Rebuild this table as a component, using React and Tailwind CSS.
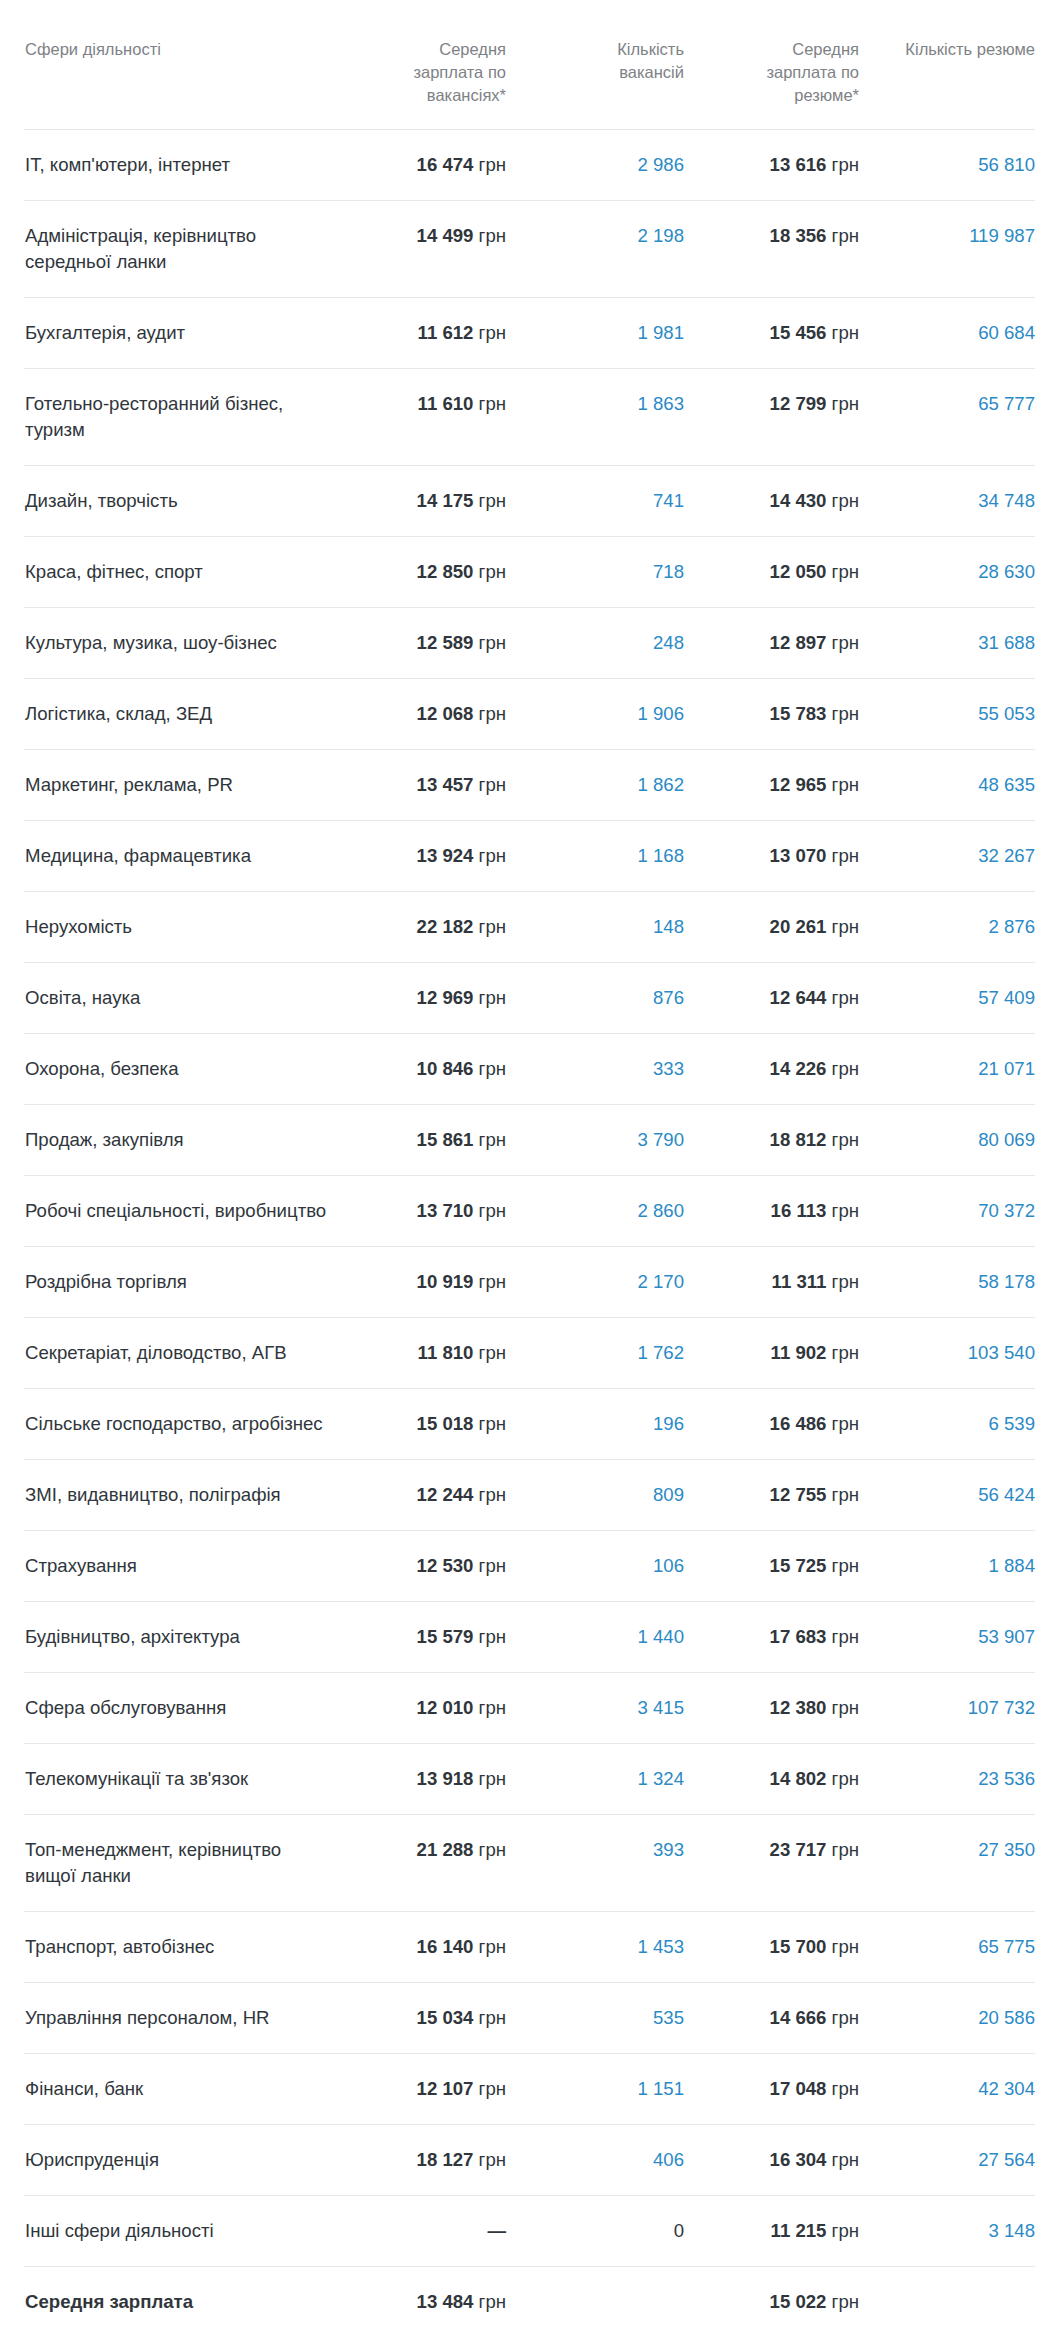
const rows = [
  ['IT, комп\'ютери, інтернет', '16 474', '2 986', '13 616', '56 810'],
  ['Адміністрація, керівництво середньої ланки', '14 499', '2 198', '18 356', '119 987'],
  ['Бухгалтерія, аудит', '11 612', '1 981', '15 456', '60 684'],
  ['Готельно-ресторанний бізнес, туризм', '11 610', '1 863', '12 799', '65 777'],
  ['Дизайн, творчість', '14 175', '741', '14 430', '34 748'],
  ['Краса, фітнес, спорт', '12 850', '718', '12 050', '28 630'],
  ['Культура, музика, шоу-бізнес', '12 589', '248', '12 897', '31 688'],
  ['Логістика, склад, ЗЕД', '12 068', '1 906', '15 783', '55 053'],
  ['Маркетинг, реклама, PR', '13 457', '1 862', '12 965', '48 635'],
  ['Медицина, фармацевтика', '13 924', '1 168', '13 070', '32 267'],
  ['Нерухомість', '22 182', '148', '20 261', '2 876'],
  ['Освіта, наука', '12 969', '876', '12 644', '57 409'],
  ['Охорона, безпека', '10 846', '333', '14 226', '21 071'],
  ['Продаж, закупівля', '15 861', '3 790', '18 812', '80 069'],
  ['Робочі спеціальності, виробництво', '13 710', '2 860', '16 113', '70 372'],
  ['Роздрібна торгівля', '10 919', '2 170', '11 311', '58 178'],
  ['Секретаріат, діловодство, АГВ', '11 810', '1 762', '11 902', '103 540'],
  ['Сільське господарство, агробізнес', '15 018', '196', '16 486', '6 539'],
  ['ЗМІ, видавництво, поліграфія', '12 244', '809', '12 755', '56 424'],
  ['Страхування', '12 530', '106', '15 725', '1 884'],
  ['Будівництво, архітектура', '15 579', '1 440', '17 683', '53 907'],
  ['Сфера обслуговування', '12 010', '3 415', '12 380', '107 732'],
  ['Телекомунікації та зв\'язок', '13 918', '1 324', '14 802', '23 536'],
  ['Топ-менеджмент, керівництво вищої ланки', '21 288', '393', '23 717', '27 350'],
  ['Транспорт, автобізнес', '16 140', '1 453', '15 700', '65 775'],
  ['Управління персоналом, HR', '15 034', '535', '14 666', '20 586'],
  ['Фінанси, банк', '12 107', '1 151', '17 048', '42 304'],
  ['Юриспруденція', '18 127', '406', '16 304', '27 564'],
];

const grid = 'grid grid-cols-[306px_176px_178px_175px_176px]';

function Salary({ value }) {
  return (
    <span className="text-[#30363c]">
      <b className="font-bold">{value}</b> грн
    </span>
  );
}

function Link({ value }) {
  return <span className="text-[#2b8ac6]">{value}</span>;
}

export default function App() {
  return (
    <div className="min-h-screen bg-white font-['Liberation_Sans',Arial,sans-serif]">
      <div className="ml-[24px] w-[1011px]">
        {/* header */}
        <div className={`${grid} border-b border-[#e8e8e8] pt-[38px] pb-[22px] text-[16.5px] leading-[23px] text-[#7e8286]`}>
          <div className="pl-px">Сфери діяльності</div>
          <div className="text-right">
            <div className="ml-auto max-w-[112px]">Середня зарплата по вакансіях*</div>
          </div>
          <div className="text-right">
            <div className="ml-auto max-w-[112px]">Кількість вакансій</div>
          </div>
          <div className="text-right">
            <div className="ml-auto max-w-[112px]">Середня зарплата по резюме*</div>
          </div>
          <div className="text-right">Кількість резюме</div>
        </div>

        {/* rows */}
        {rows.map(([name, vac, vacCount, res, resCount]) => (
          <div
            key={name}
            className={`${grid} border-b border-[#e8e8e8] py-[22px] text-[18.6px] leading-[26px] text-[#30363c]`}
          >
            <div className="w-[305px] pl-px">{name}</div>
            <div className="text-right"><Salary value={vac} /></div>
            <div className="text-right"><Link value={vacCount} /></div>
            <div className="text-right"><Salary value={res} /></div>
            <div className="text-right"><Link value={resCount} /></div>
          </div>
        ))}

        <div className={`${grid} border-b border-[#e8e8e8] py-[22px] text-[18.6px] leading-[26px] text-[#30363c]`}>
          <div className="pl-px">Інші сфери діяльності</div>
          <div className="text-right font-bold">—</div>
          <div className="text-right">0</div>
          <div className="text-right"><Salary value="11 215" /></div>
          <div className="text-right"><Link value="3 148" /></div>
        </div>

        <div className={`${grid} py-[22px] text-[18.6px] leading-[26px] text-[#30363c]`}>
          <div className="pl-px font-bold">Середня зарплата</div>
          <div className="text-right"><Salary value="13 484" /></div>
          <div />
          <div className="text-right"><Salary value="15 022" /></div>
          <div />
        </div>
      </div>
    </div>
  );
}
